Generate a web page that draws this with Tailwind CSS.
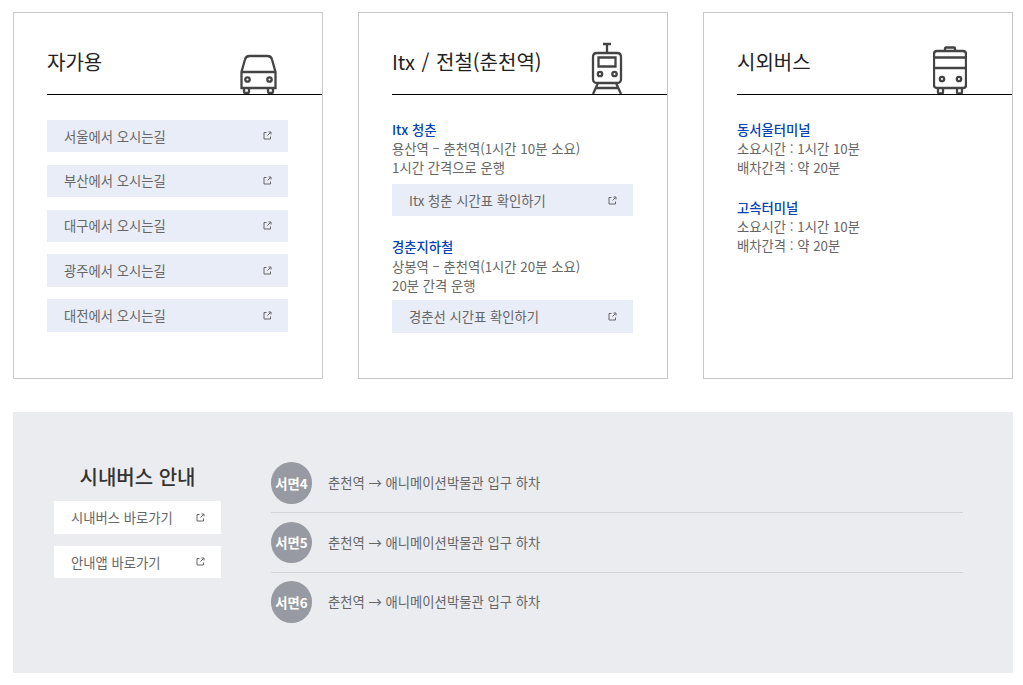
<!DOCTYPE html>
<html lang="ko">
<head>
  <meta charset="UTF-8">
  <title>오시는길</title>
  <script src="https://cdn.jsdelivr.net/npm/@tailwindcss/browser@4"></script>
</head>
<body class="bg-white font-['Noto_Sans_CJK_KR','Noto_Sans',sans-serif] text-[13.33px] leading-[19px] text-[#666]">
  <svg class="hidden">
    <symbol id="ext" viewBox="0 0 9 9">
      <path d="M3.500 1.500H1v6.500h6.500V5.500M4.500 4.500l3-3M5.500 1h2.500v2.500" fill="none" stroke="#666" stroke-width="1"/>
    </symbol>
  </svg>
  <main class="w-[1023px] pt-3 pl-[13px]">
    <div class="flex gap-[35px] h-[367px] w-[1000px]">

      <!-- 자가용 -->
      <section class="w-[310px] border border-[#c8c8c8] pl-[33px]">
        <div class="relative h-[82px] border-b border-black">
          <h2 class="pt-[35px] text-[20px] leading-[28px] text-[#222]">자가용</h2>
          <svg class="absolute left-[192px] top-[41px]" width="39" height="40" viewBox="0 0 39 40" fill="none" stroke="#444" stroke-width="2.300">
            <path d="M10.500 2h18c2.500 0 4 1.500 4.500 3.500L36.500 18v16H2.500V18L6 5.500C6.500 3.500 8 2 10.500 2zM2.500 18h34M5 34v3.500q0 1.500 1.500 1.500h2q1.500 0 1.500-1.500V34M29 34v3.500q0 1.500 1.500 1.500h2q1.500 0 1.500-1.500V34"/>
            <circle cx="8.500" cy="25.500" r="2.200"/><circle cx="30.500" cy="25.500" r="2.200"/>
          </svg>
        </div>
        <ul class="mt-[25px] w-[241px] flex flex-col">
          <li class="h-[32px] bg-[#e9edf7] pl-[17px] pr-4 flex items-center justify-between"><span>서울에서 오시는길</span><svg class="w-[9px] h-[9px] -mt-[1px]"><use href="#ext"/></svg></li>
          <li class="mt-[13px] h-[32px] bg-[#e9edf7] pl-[17px] pr-4 flex items-center justify-between"><span class="-mt-[1px]">부산에서 오시는길</span><svg class="w-[9px] h-[9px] -mt-[1px]"><use href="#ext"/></svg></li>
          <li class="mt-[13px] h-[32px] bg-[#e9edf7] pl-[17px] pr-4 flex items-center justify-between"><span class="-mt-[1px]">대구에서 오시는길</span><svg class="w-[9px] h-[9px] -mt-[1px]"><use href="#ext"/></svg></li>
          <li class="mt-[12px] h-[33px] bg-[#e9edf7] pl-[17px] pr-4 flex items-center justify-between"><span>광주에서 오시는길</span><svg class="w-[9px] h-[9px] -mt-[1px]"><use href="#ext"/></svg></li>
          <li class="mt-[12px] h-[33px] bg-[#e9edf7] pl-[17px] pr-4 flex items-center justify-between"><span>대전에서 오시는길</span><svg class="w-[9px] h-[9px] -mt-[1px]"><use href="#ext"/></svg></li>
        </ul>
      </section>

      <!-- Itx / 전철 -->
      <section class="w-[310px] border border-[#c8c8c8] pl-[33px]">
        <div class="relative h-[82px] border-b border-black">
          <h2 class="pt-[35px] text-[20px] leading-[28px] text-[#222] [word-spacing:1px]">Itx / 전철(춘천역)</h2>
          <svg class="absolute left-[199px] top-[29px]" width="32" height="52" viewBox="0 0 32 52" fill="none" stroke="#444" stroke-width="2.300">
            <path d="M12 2h8M16 2v9M6 11h20q4 0 4 4v22q0 4-4 4H6q-4 0-4-4V15q0-4 4-4zM7.500 15.500h17v9h-17zM7 41 2 52M25 41l5 11M4.500 46h23"/>
            <circle cx="9" cy="32" r="2.200"/><circle cx="23.500" cy="32" r="2.200"/>
          </svg>
        </div>
        <div class="mt-[25px] w-[241px]">
          <h3 class="text-[#0040b8] font-medium">Itx 청춘</h3>
          <p>용산역 – 춘천역(1시간 10분 소요)</p>
          <p>1시간 간격으로 운행</p>
          <div class="mt-[7px] h-[32px] bg-[#e9edf7] pl-[17px] pr-4 flex items-center justify-between"><span>Itx 청춘 시간표 확인하기</span><svg class="w-[9px] h-[9px]"><use href="#ext"/></svg></div>
          <h3 class="mt-[21px] text-[#0040b8] font-medium">경춘지하철</h3>
          <p class="mt-[1px]">상봉역 – 춘천역(1시간 20분 소요)</p>
          <p>20분 간격 운행</p>
          <div class="mt-[5px] h-[33px] bg-[#e9edf7] pl-[17px] pr-4 flex items-center justify-between"><span>경춘선 시간표 확인하기</span><svg class="w-[9px] h-[9px]"><use href="#ext"/></svg></div>
        </div>
      </section>

      <!-- 시외버스 -->
      <section class="w-[310px] border border-[#c8c8c8] pl-[33px]">
        <div class="relative h-[82px] border-b border-black">
          <h2 class="pt-[35px] text-[20px] leading-[28px] text-[#222]">시외버스</h2>
          <svg class="absolute left-[196px] top-[33px]" width="34" height="48" viewBox="0 0 34 48" fill="none" stroke="#444" stroke-width="2.300">
            <path d="M12 5V2.500q0-1 1-1h8q1 0 1 1V5M4 5h26q3 0 3 3v31q0 3-3 3H4q-3 0-3-3V8q0-3 3-3zM1 11.500h32M1 22h32M5 42v4q0 1.500 1.500 1.500h2q1.500 0 1.500-1.500v-4M24 42v4q0 1.500 1.500 1.500h2q1.500 0 1.500-1.500v-4"/>
            <circle cx="9" cy="33" r="2.200"/><circle cx="26" cy="33" r="2.200"/>
          </svg>
        </div>
        <div class="mt-[25px]">
          <h3 class="text-[#0040b8] font-medium">동서울터미널</h3>
          <p>소요시간 : 1시간 10분</p>
          <p>배차간격 : 약 20분</p>
          <h3 class="mt-[21px] text-[#0040b8] font-medium">고속터미널</h3>
          <p>소요시간 : 1시간 10분</p>
          <p>배차간격 : 약 20분</p>
        </div>
      </section>
    </div>

    <!-- 시내버스 안내 -->
    <section class="mt-[33px] w-[1000px] h-[261px] bg-[#ebecf0] flex">
      <div class="w-[258px] pl-[41px] pt-[52px]">
        <h2 class="w-[167px] text-center text-[20px] leading-[26px] font-medium text-[#333]">시내버스 안내</h2>
        <div class="mt-[11px] w-[167px] h-[33px] bg-white pl-[17px] pr-4 flex items-center justify-between"><span>시내버스 바로가기</span><svg class="w-[9px] h-[9px] -mt-[1px]"><use href="#ext"/></svg></div>
        <div class="mt-[12px] w-[167px] h-[32px] bg-white pl-[17px] pr-4 flex items-center justify-between"><span>안내앱 바로가기</span><svg class="w-[9px] h-[9px] -mt-[1px]"><use href="#ext"/></svg></div>
      </div>
      <ul class="w-[692px] pt-[50px]">
        <li class="h-[51px] border-b border-[#d2d3d8] flex items-start">
          <span class="w-[41px] h-[42px] rounded-full bg-[#979aa2] text-white font-bold flex items-center justify-center">서면4</span>
          <span class="ml-4 mt-[11px]">춘천역 → 애니메이션박물관 입구 하차</span>
        </li>
        <li class="h-[60px] pt-[9px] border-b border-[#d2d3d8] flex items-start">
          <span class="w-[41px] h-[41px] rounded-full bg-[#979aa2] text-white font-bold flex items-center justify-center">서면5</span>
          <span class="ml-4 mt-[11px]">춘천역 → 애니메이션박물관 입구 하차</span>
        </li>
        <li class="h-[60px] pt-[8px] flex items-start">
          <span class="w-[41px] h-[42px] rounded-full bg-[#979aa2] text-white font-bold flex items-center justify-center">서면6</span>
          <span class="ml-4 mt-[11px]">춘천역 → 애니메이션박물관 입구 하차</span>
        </li>
      </ul>
    </section>
  </main>
</body>
</html>
